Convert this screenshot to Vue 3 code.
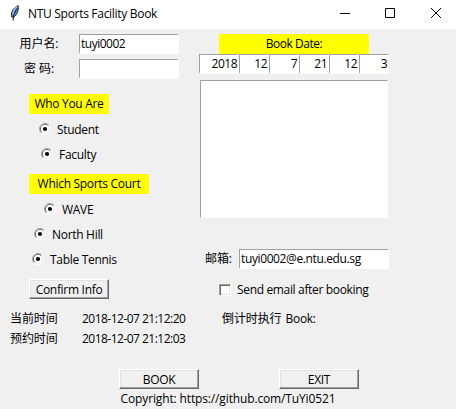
<script setup>
import { ref } from 'vue'

const username = ref('tuyi0002')
const dateParts = ['2018', '12', '7', '21', '12', '3']
const roles = [
  { name: 'Student', cls: 'student' },
  { name: 'Faculty', cls: 'faculty' },
]
const courts = [
  { name: 'WAVE', cls: 'wave' },
  { name: 'North Hill', cls: 'north' },
  { name: 'Table Tennis', cls: 'table' },
]
</script>

<template>
  <div class="window">
    <header class="titlebar">
      <svg class="feather" width="12" height="18" viewBox="0 0 12 18">
        <path d="M2.800 13C1.500 9.500 3.500 4 9.200 1.700C10 6 7.900 11 4.200 13.500Z" fill="#5b91d0" stroke="#151e2c" stroke-width="1" />
        <path d="M4.200 10.500C4.200 7 6 4 8.300 2.800" fill="none" stroke="#a6cdf4" stroke-width="1.200" />
        <path d="M7.800 4.500L4.900 10.500L4 16.500" fill="none" stroke="#17202c" stroke-width="1" />
      </svg>
      <span class="title">NTU Sports Facility Book</span>
      <svg class="controls" width="104" height="12" viewBox="0 0 104 12" fill="none" stroke="#000" stroke-width="1">
        <path d="M0 6.500H10" />
        <path d="M45.500 1.500H54.500V10.500H45.500Z" />
        <path d="M91 1L101 11M101 1L91 11" />
      </svg>
    </header>

    <main class="body">
      <section class="left">
        <div class="field"><label class="cjk name"><span>用户名:</span></label><div class="entry short"><span class="user">{{ username }}</span></div></div>
        <div class="field second"><label class="cjk name"><span>密 码:</span></label><div class="entry short"></div></div>

        <div class="heading who"><span>Who You Are</span></div>
        <div v-for="r in roles" :key="r.name" class="option" :class="r.cls">
          <svg width="12" height="12" viewBox="0 0 12 12">
            <circle cx="6" cy="6" r="5" fill="#e6e6e6" />
            <path d="M2.100 9.900A5.500 5.500 0 0 1 9.900 2.100" fill="none" stroke="#a0a0a0" />
            <path d="M2.800 9.200A4.500 4.500 0 0 1 9.200 2.800" fill="none" stroke="#696969" />
            <path d="M9.900 2.100A5.500 5.500 0 0 1 2.100 9.900" fill="none" stroke="#fff" />
            <circle cx="6" cy="6" r="3.900" fill="#fff" />
            <circle cx="6" cy="6" r="2.100" fill="#000" />
          </svg>
          <span>{{ r.name }}</span>
        </div>

        <div class="heading which"><span>Which Sports Court</span></div>
        <div v-for="c in courts" :key="c.name" class="option" :class="c.cls">
          <svg width="12" height="12" viewBox="0 0 12 12">
            <circle cx="6" cy="6" r="5" fill="#e6e6e6" />
            <path d="M2.100 9.900A5.500 5.500 0 0 1 9.900 2.100" fill="none" stroke="#a0a0a0" />
            <path d="M2.800 9.200A4.500 4.500 0 0 1 9.200 2.800" fill="none" stroke="#696969" />
            <path d="M9.900 2.100A5.500 5.500 0 0 1 2.100 9.900" fill="none" stroke="#fff" />
            <circle cx="6" cy="6" r="3.900" fill="#fff" />
            <circle cx="6" cy="6" r="2.100" fill="#000" />
          </svg>
          <span>{{ c.name }}</span>
        </div>

        <button class="btn confirm"><span>Confirm Info</span></button>

        <div class="time now"><span class="cjk">当前时间</span><span class="stamp">2018-12-07 21:12:20</span></div>
        <div class="time"><span class="cjk">预约时间</span><span class="stamp">2018-12-07 21:12:03</span></div>
      </section>

      <section class="right">
        <div class="heading date"><span>Book Date:</span></div>
        <div class="parts">
          <div v-for="(p, i) in dateParts" :key="i" class="entry part"><span>{{ p }}</span></div>
        </div>
        <div class="log"></div>
        <div class="mail">
          <label class="cjk">邮箱:</label>
          <div class="entry long"><span class="email">tuyi0002@e.ntu.edu.sg</span></div>
        </div>
        <div class="check"><i class="box"></i><span>Send email after booking</span></div>
        <div class="countdown"><span class="cjk">倒计时执行</span><span class="book">Book:</span></div>
      </section>
    </main>

    <footer>
      <div class="actions">
        <button class="btn"><span>BOOK</span></button>
        <button class="btn"><span>EXIT</span></button>
      </div>
      <div class="copyright"><span>Copyright: https://github.com/TuYi0521</span></div>
    </footer>
  </div>
</template>

<style>
body { margin: 0; }
</style>

<style scoped>
.window {
  box-sizing: border-box;
  width: 456px;
  height: 409px;
  overflow: hidden;
  background: #f0f0f0;
  color: #000;
  font: 12px/20px "Open Sans", "Noto Sans CJK SC", sans-serif;
  letter-spacing: -0.3px;
  white-space: nowrap;
}
.window * { box-sizing: border-box; }
.cjk { font-weight: 400; letter-spacing: -0.1px; }
.titlebar { display: flex; align-items: center; height: 29px; padding-left: 9px; background: #fff; }
.feather { margin-top: -3px; }
.title { margin: -2px 0 0 7px; width: 312px; }
.controls { margin-top: -3px; }
.body { display: flex; height: 340px; }
.left { width: 199px; padding-top: 5px; }
.right { width: 190px; padding-top: 5px; }
.field { display: flex; height: 20px; }
.second { margin-top: 5px; }
.name { width: 79px; padding-right: 1px; text-align: center; }
.entry { height: 20px; background: #fff; border: 2px solid #fff; border-top-color: #a0a0a0; border-left-color: #a0a0a0; border-top-width: 1px; border-left-width: 1px; line-height: 18px; padding-left: 1px; }
.user { letter-spacing: -0.5px; }
.short { width: 100px; }
.heading { display: flex; justify-content: center; height: 20px; background: #ff0; }
.who { width: 80px; margin: 15px 0 5px 29px; }
.which { width: 120px; margin: 10px 0 5px 29px; }
.option { display: flex; align-items: center; gap: 6px; height: 20px; }
.option + .option { margin-top: 5px; }
.option svg { display: block; margin-top: -1px; }
.option span { padding-top: 2px; }
.student { padding-left: 39px; }
.faculty { padding-left: 41px; }
.wave { padding-left: 44px; }
.north { padding-left: 34px; }
.table { padding-left: 32px; }
.btn { display: flex; justify-content: center; align-items: center; width: 80px; height: 20px; padding: 0; margin: 0; background: #f0f0f0; color: #000; font: inherit; letter-spacing: inherit; line-height: 17px; border: 1px solid #fff; border-right-color: #696969; border-bottom-color: #696969; box-shadow: inset -1px -1px #a0a0a0, inset 1px 1px #e3e3e3; }
.confirm { margin: 10px 0 0 29px; }
.time { display: flex; height: 20px; padding-left: 10px; }
.now { margin-top: 10px; }
.time .cjk { width: 72px; }
.stamp { letter-spacing: -0.52px; }
.date { width: 150px; margin-left: 20px; letter-spacing: -0.45px; }
.parts { display: flex; }
.part { width: 30px; text-align: right; padding: 0; letter-spacing: -0.5px; }
.part:first-child { width: 40px; }
.log { width: 188px; height: 138px; margin: 6px 0 0 1px; background: #fff; border: 1px solid #fff; border-top-color: #a0a0a0; border-left-color: #a0a0a0; }
.mail { display: flex; margin-top: 31px; padding-left: 6px; }
.mail label { width: 34px; }
.long { width: 150px; }
.email { letter-spacing: -0.38px; }
.check { display: flex; align-items: center; gap: 6px; height: 20px; margin-top: 11px; padding-left: 20px; letter-spacing: -0.34px; }
.box { width: 12px; height: 12px; background: #fff; border: 1px solid #fff; border-top-color: #a0a0a0; border-left-color: #a0a0a0; box-shadow: inset 1px 1px #696969, inset -1px -1px #e3e3e3; }
.countdown { display: flex; gap: 4px; margin-top: 9px; padding-left: 23px; }
.actions { display: flex; gap: 80px; padding-left: 119px; }
.copyright { width: 456px; text-align: center; letter-spacing: -0.14px; }
</style>
